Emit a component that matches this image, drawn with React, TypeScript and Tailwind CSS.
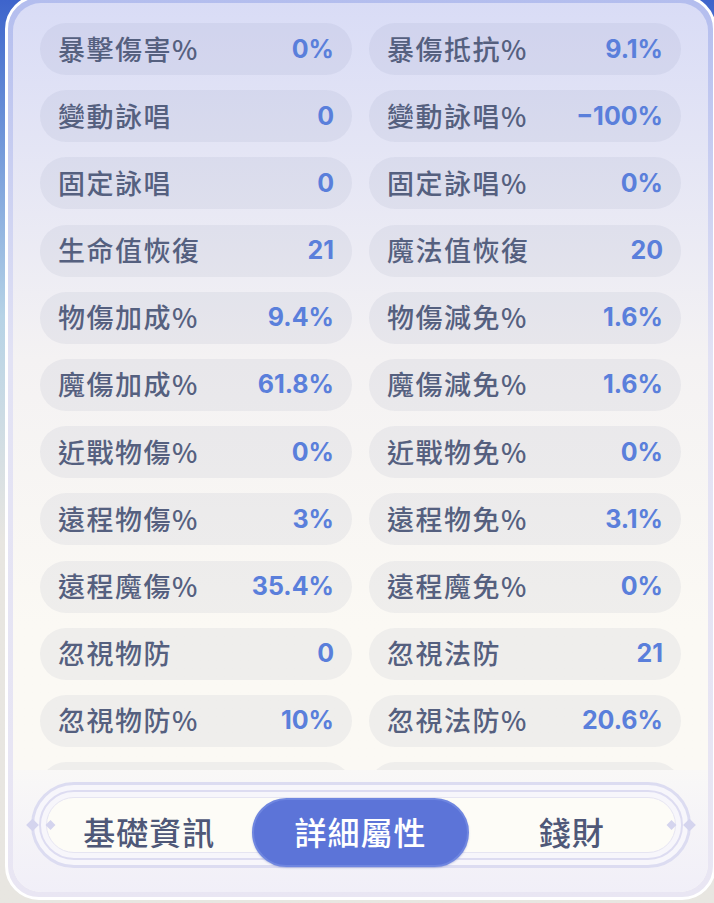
import React from 'react'

type Stat = { label: string; value: string }

const rows: [Stat, Stat][] = [
  [{ label: '暴擊傷害%', value: '0%' }, { label: '暴傷抵抗%', value: '9.1%' }],
  [{ label: '變動詠唱', value: '0' }, { label: '變動詠唱%', value: '−100%' }],
  [{ label: '固定詠唱', value: '0' }, { label: '固定詠唱%', value: '0%' }],
  [{ label: '生命值恢復', value: '21' }, { label: '魔法值恢復', value: '20' }],
  [{ label: '物傷加成%', value: '9.4%' }, { label: '物傷減免%', value: '1.6%' }],
  [{ label: '魔傷加成%', value: '61.8%' }, { label: '魔傷減免%', value: '1.6%' }],
  [{ label: '近戰物傷%', value: '0%' }, { label: '近戰物免%', value: '0%' }],
  [{ label: '遠程物傷%', value: '3%' }, { label: '遠程物免%', value: '3.1%' }],
  [{ label: '遠程魔傷%', value: '35.4%' }, { label: '遠程魔免%', value: '0%' }],
  [{ label: '忽視物防', value: '0' }, { label: '忽視法防', value: '21' }],
  [{ label: '忽視物防%', value: '10%' }, { label: '忽視法防%', value: '20.6%' }],
  [{ label: '', value: '' }, { label: '', value: '' }],
]

const cjk = { fontFamily: '"Noto Sans CJK TC", "Noto Sans", sans-serif' }
const num = { fontFamily: 'Inter, "Noto Sans", sans-serif' }

function StatPill({ stat }: { stat: Stat }) {
  return (
    <div className="flex h-[52px] items-center justify-between rounded-full bg-[#3a4070]/[0.06] pl-[18px] pr-[18px]">
      <span style={cjk} className="-translate-y-[1px] text-[27px] font-medium leading-none tracking-[1.5px] text-[#55607f]">
        {stat.label}
      </span>
      <span style={num} className="text-[25px] font-bold leading-none text-[#5a7fdb]">
        {stat.value}
      </span>
    </div>
  )
}

function Diamond({ className }: { className: string }) {
  return <div className={`absolute top-1/2 -translate-y-1/2 rotate-45 bg-[#d4d4ee] ${className}`} />
}

export default function App() {
  return (
    <div className="h-[903px] w-[714px] overflow-hidden bg-linear-to-b from-[#3e64cb] via-[#b6d3e6] via-35% to-[#e8e6e1] to-60%">
      <div className="-mt-[5px] ml-[5px] flex h-[905px] w-[711px] flex-col rounded-[34px] border-[3px] border-white bg-linear-to-b from-[#b3bdee] via-[#e2e2f4] via-40% to-[#e9e6f3] p-[5px]">
        <div className="flex flex-1 flex-col overflow-hidden rounded-[28px] bg-linear-to-b from-[#d9dcf6] via-[#f4f2f3] via-40% to-[#fbf9f4] to-70%">
          {/* stat list */}
          <div className="h-[767px] overflow-hidden px-[27px] pt-[20px]">
            <div className="grid grid-cols-2 gap-x-[17px] gap-y-[15.2px]">
              {rows.map(([a, b], i) => (
                <React.Fragment key={i}>
                  <StatPill stat={a} />
                  <StatPill stat={b} />
                </React.Fragment>
              ))}
            </div>
          </div>

          {/* tabs */}
          <div className="flex flex-1 flex-col bg-linear-to-b from-[#f9f8f7] to-[#f1eff8] pt-[12px]">
            <div className="relative mx-auto w-[660px]">
              <Diamond className="-left-[3px] h-[9px] w-[9px]" />
              <Diamond className="-right-[3px] h-[9px] w-[9px]" />
              <div className="h-[86px] rounded-full border-[3px] border-[#dcdcf1] bg-[#f7f6fb] p-[5px]">
                <div className="relative h-full rounded-full border-2 border-[#dddcf1] p-[5px]">
                  <Diamond className="left-[6px] h-[7px] w-[7px]" />
                  <Diamond className="right-[6px] h-[7px] w-[7px]" />
                  <div className="grid h-full grid-cols-[1fr_217px_1fr] items-center rounded-full border border-[#e6e5f2] bg-[#fdfcf7]">
                    <div style={cjk} className="-translate-y-[2px] text-center text-[32px] font-medium leading-none tracking-[1px] text-[#4f5878]">
                      基礎資訊
                    </div>
                    <div className="flex h-[69px] items-center justify-center rounded-full border-2 border-[#6f86e0] bg-[#5c74d8] shadow-[0_1px_2px_rgba(60,80,170,0.3)]">
                      <span style={cjk} className="-translate-y-[2px] text-[32px] font-medium leading-none tracking-[1px] text-white">
                        詳細屬性
                      </span>
                    </div>
                    <div style={cjk} className="-translate-y-[2px] text-center text-[32px] font-medium leading-none tracking-[1px] text-[#4f5878]">
                      錢財
                    </div>
                  </div>
                </div>
              </div>
            </div>
          </div>
        </div>
      </div>
    </div>
  )
}
